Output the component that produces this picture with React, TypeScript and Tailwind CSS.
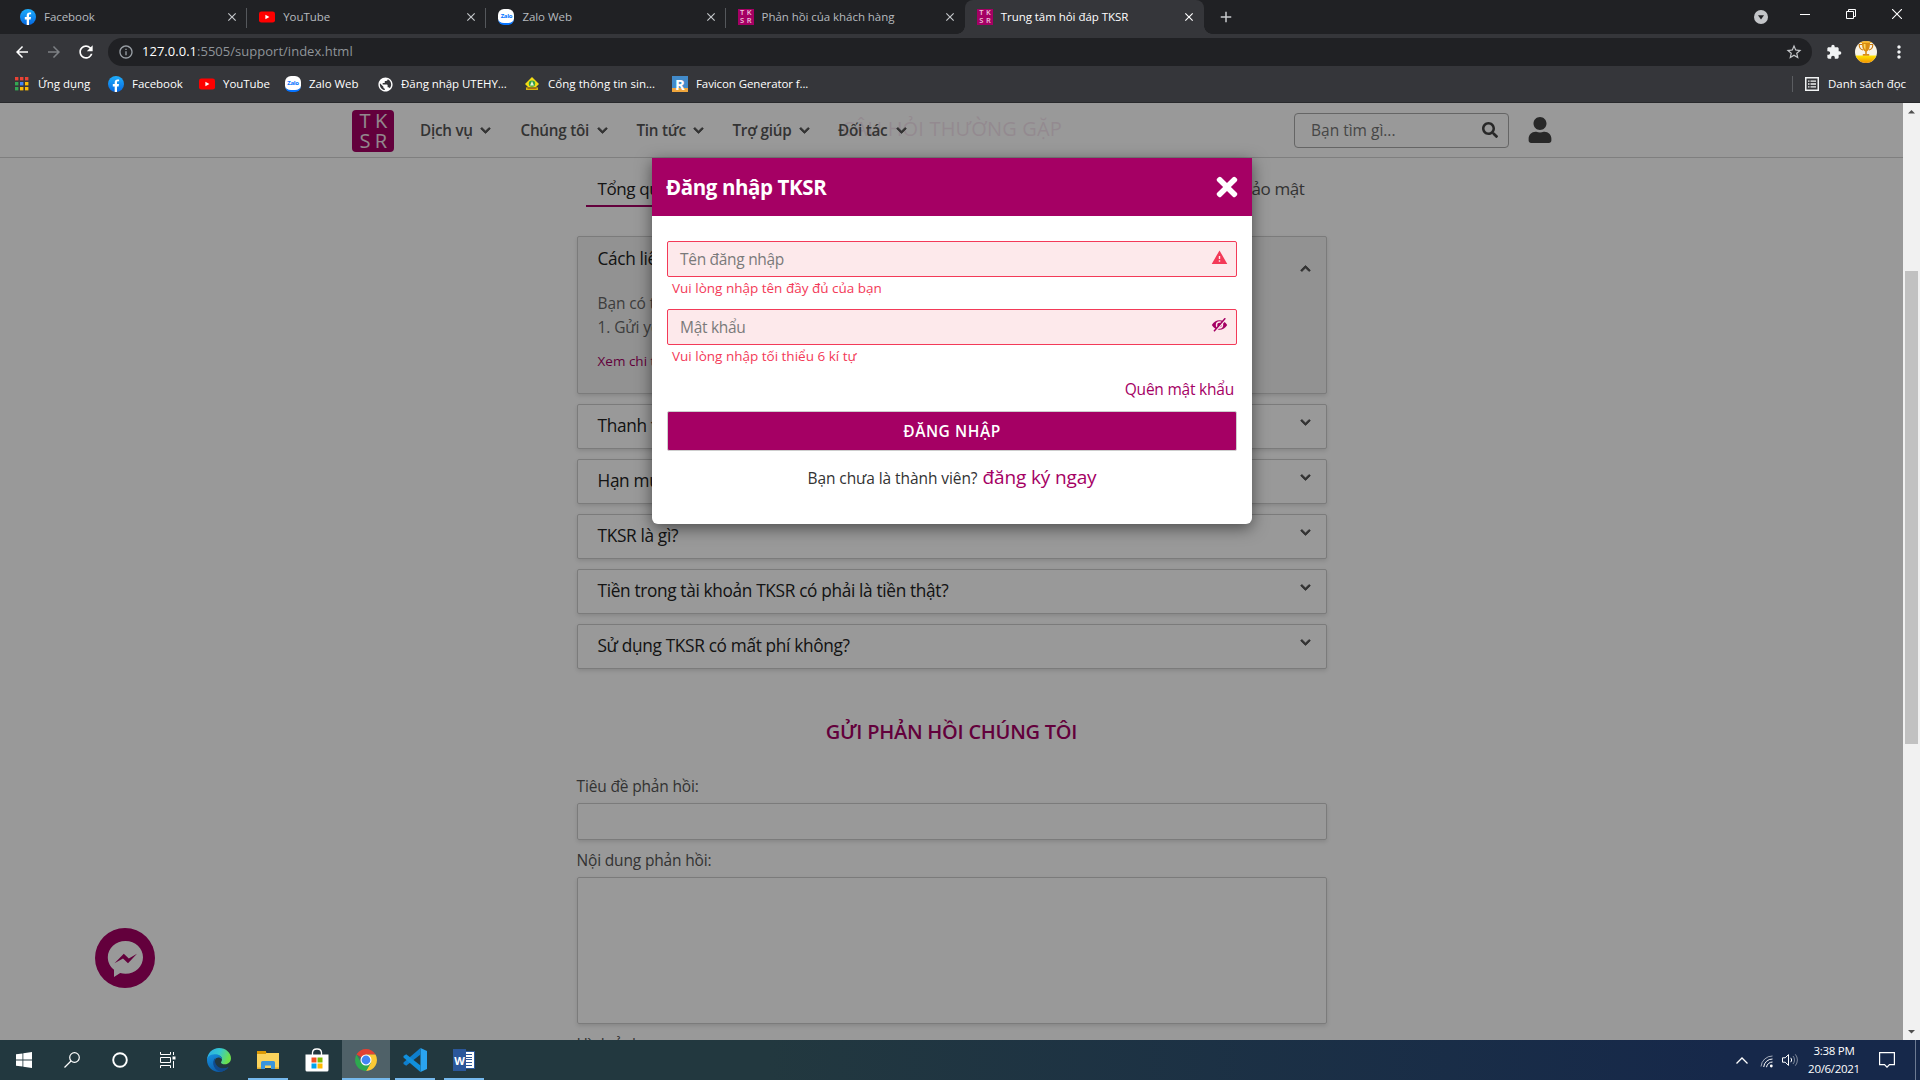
import type { ReactNode } from "react";
import {
  MdArrowBack,
  MdArrowForward,
  MdRefresh,
  MdInfoOutline,
  MdStarBorder,
  MdExtension,
  MdMoreVert,
  MdClose,
  MdAdd,
  MdPublic,
  MdWarning,
} from "react-icons/md";
import { FaChevronDown, FaChevronUp, FaSearch, FaUser, FaTimes } from "react-icons/fa";

/* ---------- small brand icons ---------- */

function FacebookIcon() {
  return (
    <svg width="16" height="16" viewBox="0 0 16 16" className="shrink-0">
      <defs>
        <linearGradient id="fb" x1="0" y1="0" x2="0" y2="1">
          <stop offset="0" stopColor="#1eaefc" />
          <stop offset="1" stopColor="#0668e1" />
        </linearGradient>
      </defs>
      <circle cx="8" cy="8" r="8" fill="url(#fb)" />
      <path d="M6.7 16v-5.6H4.8V8h1.9V6.5c0-2 1.1-3.1 2.9-3.1.7 0 1.5.1 1.5.1v1.8h-1c-.9 0-1.1.5-1.1 1.1V8H11l-.4 2.4H9V16z" fill="#fff" />
    </svg>
  );
}

function YouTubeIcon() {
  return (
    <svg width="16" height="16" viewBox="0 0 16 16" className="shrink-0">
      <rect x="0" y="2.4" width="16" height="11.2" rx="2.4" fill="#f00" />
      <path d="M6.4 5.7 10.4 8l-4 2.3z" fill="#fff" />
    </svg>
  );
}

function ZaloIcon() {
  return (
    <div className="flex h-4 w-4 shrink-0 items-center justify-center rounded-[6px] border-b-2 border-[#0573ff] bg-white">
      <span className="text-[6px] leading-none font-bold tracking-[-0.3px] text-[#0573ff]">Zalo</span>
    </div>
  );
}

function TksrFavicon() {
  return (
    <div className="grid h-4 w-4 shrink-0 grid-cols-2 grid-rows-2 place-items-center bg-[#a50064] px-px text-[7.5px] leading-none font-semibold text-[#f0c8de]">
      <span>T</span>
      <span>K</span>
      <span>S</span>
      <span>R</span>
    </div>
  );
}

function AppsIcon() {
  const colors = ["#ea4335", "#ea4335", "#ea4335", "#34a853", "#4285f4", "#fbbc05", "#34a853", "#fbbc05", "#fbbc05"];
  return (
    <svg width="14" height="14" viewBox="0 0 14 14" className="shrink-0">
      {colors.map((c, i) => (
        <rect key={i} x={(i % 3) * 5} y={Math.floor(i / 3) * 5} width="3.4" height="3.4" fill={c} />
      ))}
    </svg>
  );
}

function UniversityIcon() {
  return (
    <svg width="16" height="16" viewBox="0 0 16 16" className="shrink-0">
      <path d="M8 1 15 8l-3 3H4L1 8z" fill="#f2dc14" />
      <circle cx="8" cy="7.6" r="3.2" fill="#2f9e4a" />
      <path d="m8 5 2 4.4H6z" fill="#e8f5d0" />
      <path d="M2 11.4h12V14H2z" fill="#d9b50e" />
      <path d="M3.5 12.4h9" stroke="#a05a14" strokeWidth="0.9" />
    </svg>
  );
}

function RealFaviconIcon() {
  return (
    <div className="flex h-4 w-4 shrink-0 items-center justify-center border-b-4 border-[#f0a63c] bg-[#428bca]">
      <span className="mt-1 text-[15px] leading-none font-bold text-white">R</span>
    </div>
  );
}

/* ---------- browser chrome ---------- */

type TabInfo = { title: string; icon: ReactNode; active?: boolean; divider?: boolean };

const tabs: TabInfo[] = [
  { title: "Facebook", icon: <FacebookIcon />, divider: true },
  { title: "YouTube", icon: <YouTubeIcon />, divider: true },
  { title: "Zalo Web", icon: <ZaloIcon />, divider: true },
  { title: "Phản hồi của khách hàng", icon: <TksrFavicon /> },
  { title: "Trung tâm hỏi đáp TKSR", icon: <TksrFavicon />, active: true },
];

function Tab({ title, icon, active, divider }: TabInfo) {
  return (
    <div className={`relative flex h-[34px] w-[239.200px] items-center pl-3 ${active ? "rounded-t-lg bg-[#35363a]" : ""}`}>
      {active && (
        <>
          <span className="absolute bottom-0 -left-2 h-2 w-2 bg-[radial-gradient(circle_at_0_0,#202124_7.500px,#35363a_8px)]" />
          <span className="absolute -right-2 bottom-0 h-2 w-2 bg-[radial-gradient(circle_at_100%_0,#202124_7.500px,#35363a_8px)]" />
        </>
      )}
      {icon}
      <span className={`ml-2 flex-1 whitespace-nowrap ${active ? "text-white" : "text-[#b6babf]"}`}>{title}</span>
      <MdClose size={14} className={`mr-2 ${active ? "text-white" : "text-[#c4c7ca]"}`} />
      {divider && <span className="absolute top-2 right-0 h-5 w-px bg-[#55585c]" />}
    </div>
  );
}

function TabStrip() {
  return (
    <div className="flex h-[34px] bg-[#202124] pl-2">
      {tabs.map((t) => (
        <Tab key={t.title} {...t} />
      ))}
      <div className="ml-[13px] flex items-center text-[#c8cacd]">
        <MdAdd size={18} />
      </div>
      <div className="ml-auto flex text-white">
        <svg width="14" height="14" viewBox="0 0 14 14" className="mt-[10px] mr-[32px]">
          <circle cx="7" cy="7" r="7" fill="#c3c5c8" />
          <path d="M4 5.2h6L7 9.6z" fill="#202124" />
        </svg>
        <svg width="10" height="10" viewBox="0 0 10 10" className="mt-[9px] mr-[36px]">
          <path d="M0 5.5h10" stroke="#fff" />
        </svg>
        <svg width="10" height="10" viewBox="0 0 10 10" className="mt-[9px] mr-[36px]">
          <path d="M.5 2.5h7v7h-7zM2.5 2.5v-2h7v7h-2" stroke="#fff" fill="none" />
        </svg>
        <svg width="10" height="10" viewBox="0 0 10 10" className="mt-[9px] mr-[18px]">
          <path d="m0 0 10 10M10 0 0 10" stroke="#fff" strokeWidth="1.1" />
        </svg>
      </div>
    </div>
  );
}

function ProfileAvatar() {
  return (
    <svg width="22" height="22" viewBox="0 0 22 22" className="ml-[13px] shrink-0">
      <defs>
        <clipPath id="avatar">
          <circle cx="11" cy="11" r="11" />
        </clipPath>
        <linearGradient id="gold" x1="0" y1="0" x2="0" y2="1">
          <stop offset="0" stopColor="#ffe600" />
          <stop offset="1" stopColor="#f08c00" />
        </linearGradient>
      </defs>
      <g clipPath="url(#avatar)">
        <rect width="22" height="22" fill="#f7f3e6" />
        <rect width="22" height="2" fill="#f5b52a" />
        <rect y="14.500" width="22" height="8" fill="url(#gold)" />
        <path d="M7 2h8c0 5-1.200 7.500-3.200 8.500v2.400h2.400v1.800H7.800v-1.800h2.400v-2.400C8.200 9.500 7 7 7 2z" fill="#d98c12" />
        <path d="M7 3.500H4.200c0 3.500 1.300 5 3.800 5.500M15 3.500h2.800c0 3.500-1.300 5-3.800 5.500" stroke="#c9790a" strokeWidth="1.100" fill="none" />
        <path d="M8.600 3h1.900v6C9.300 8 8.600 6 8.600 3z" fill="#ffd75a" />
      </g>
    </svg>
  );
}

function Toolbar() {
  return (
    <div className="flex h-9 items-center bg-[#35363a] pr-3 pl-[13px]">
      <MdArrowBack size={18} className="text-white" />
      <MdArrowForward size={18} className="ml-[14px] text-[#7d8084]" />
      <MdRefresh size={20} className="ml-[13px] text-white" />
      <div className="ml-[12px] flex h-7 flex-1 items-center rounded-full bg-[#202124] pr-[9px] pl-[10px]">
        <MdInfoOutline size={16} className="text-[#9aa0a6]" />
        <span className="ml-2 text-[13px] tracking-[0.02px] text-[#8f9499]">
          <span className="text-white">127.0.0.1</span>:5505/support/index.html
        </span>
        <MdStarBorder size={18} className="ml-auto text-[#c4c7ca]" />
      </div>
      <MdExtension size={16} className="ml-[14px] text-[#f1f3f4]" />
      <ProfileAvatar />
      <MdMoreVert size={20} className="-mr-[1px] ml-[12px] text-[#f1f3f4]" />
    </div>
  );
}

const bookmarks: { label: string; icon: ReactNode; width: string }[] = [
  { label: "Ứng dụng", icon: <AppsIcon />, width: "w-[54px] pl-px" },
  { label: "Facebook", icon: <FacebookIcon />, width: "w-[51px]" },
  { label: "YouTube", icon: <YouTubeIcon />, width: "w-[46px]" },
  { label: "Zalo Web", icon: <ZaloIcon />, width: "w-[52px]" },
  { label: "Đăng nhập UTEHY...", icon: <MdPublic size={17} className="-mr-px shrink-0 text-white" />, width: "w-[107px]" },
  { label: "Cổng thông tin sin...", icon: <UniversityIcon />, width: "w-[108px] tracking-[0.04px]" },
  { label: "Favicon Generator f...", icon: <RealFaviconIcon />, width: "w-[112px] tracking-[-0.1px]" },
];

function BookmarksBar() {
  return (
    <div className="flex h-[33px] items-center gap-4 border-b border-[#28292c] bg-[#35363a] pr-[13px] pb-[4px] pl-[15px] text-white">
      {bookmarks.map((b, i) => (
        <div key={b.label} className={`flex items-center gap-2 ${i === 1 ? "ml-px" : ""}`}>
          {b.icon}
          <span className={`whitespace-nowrap ${b.width}`}>{b.label}</span>
        </div>
      ))}
      <div className="ml-auto flex items-center">
        <span className="mr-3 h-4 w-px bg-[#5b5d61]" />
        <svg width="14" height="14" viewBox="0 0 14 14" fill="none" stroke="#f1f3f4">
          <rect x=".75" y=".75" width="12.500" height="12.500" strokeWidth="1.500" />
          <path d="M3 4.200h1.500M3 7h1.500M3 9.800h1.500M5.500 4.200H11M5.500 7H11M5.500 9.800H11" strokeWidth="1.300" />
        </svg>
        <span className="ml-[9px] w-[79px] whitespace-nowrap">Danh sách đọc</span>
      </div>
    </div>
  );
}

/* ---------- site ---------- */

const menu: { label: string; width: string; box: string }[] = [
  { label: "Dịch vụ", width: "w-[53px]", box: "w-[100.500px]" },
  { label: "Chúng tôi", width: "w-[69px]", box: "w-[116px]" },
  { label: "Tin tức", width: "w-[49px]", box: "w-[96px]" },
  { label: "Trợ giúp", width: "w-[59px]", box: "w-[105.500px]" },
  { label: "Đối tác", width: "w-[51px]", box: "w-[80px]" },
];

function SiteHeader() {
  return (
    <header className="absolute inset-x-0 top-0 flex h-[55px] items-center border-b border-[#d4d4d4] bg-white/90 pl-[352px]">
      <div className="mt-[2px] grid h-[42px] w-[42px] grid-cols-2 grid-rows-2 place-items-center rounded bg-[#a50064] px-[5px] py-px text-[20px] leading-[20px] text-[#f3e3ec]">
        <span>T</span>
        <span>K</span>
        <span>S</span>
        <span>R</span>
      </div>
      <nav className="ml-[26px] flex text-[15.250px] font-semibold tracking-[-0.25px] text-[#555]">
        {menu.map((m) => (
          <div key={m.label} className={`flex items-center ${m.box}`}>
            <span className={`whitespace-nowrap ${m.width}`}>{m.label}</span>
            <FaChevronDown size={11} className="ml-[7px] stroke-current [stroke-width:40]" />
          </div>
        ))}
      </nav>
      <div className="ml-[376px] flex h-[35px] w-[215px] items-center rounded border border-[#a8a8a8] pr-[10px] pl-4">
        <span className="mt-px flex-1 text-[15.500px] text-[#757575]">Bạn tìm gì...</span>
        <FaSearch size={16} className="text-[#444]" />
      </div>
      <FaUser size={26} className="ml-[18px] text-[#444]" />
    </header>
  );
}

function FaqItem({ title }: { title: string }) {
  return (
    <div className="flex h-[45px] items-center justify-between rounded-[2px] border border-[#cecece] bg-white pr-[15px] pl-5 shadow-[0_2px_4px_rgba(0,0,0,0.12)]">
      <span className="-mt-[2px] text-[17.250px] tracking-[-0.34px] text-[#222]">{title}</span>
      <FaChevronDown size={11} className="mb-[9px] stroke-current text-[#555] [stroke-width:40]" />
    </div>
  );
}

function SupportContent() {
  return (
    <main className="mx-auto w-[750px] pt-[11px]">
      <h2 className="pl-px text-center text-[20px] leading-[30px] font-medium tracking-[0.17px] text-[#a50064]">CÂU HỎI THƯỜNG GẶP</h2>
      <div className="mr-[10px] ml-[9px] mt-[29px] flex justify-between text-[17px] leading-[31px] tracking-[-0.4px]">
        <span className="border-b-2 border-[#a50064] px-3 pb-px text-[#222]">Tổng quan</span>
        <span className="border-b-2 border-transparent px-3 pb-px text-[#555]">Bảo mật</span>
      </div>

      <div className="mt-[29px] flex flex-col gap-[10px]">
        <div className="flex h-[158px] items-start justify-between rounded-[2px] border border-[#cecece] bg-[#f4f4f4] pt-[10px] pr-[15px] pl-5 shadow-[0_2px_4px_rgba(0,0,0,0.12)]">
          <div>
            <h3 className="text-[17.250px] leading-6 tracking-[-0.34px] text-[#222]">Cách liên hệ</h3>
            <p className="mt-[20px] text-[15.500px] leading-6 tracking-[-0.1px] text-[#666]">
              Bạn có thể
              <br />
              1. Gửi yêu cầu
            </p>
            <p className="mt-[12px] text-[13.500px] leading-5 text-[#a50064]">Xem chi tiết</p>
          </div>
          <FaChevronUp size={11} className="mt-[16px] stroke-current text-[#555] [stroke-width:40]" />
        </div>
        <FaqItem title="Thanh toán" />
        <FaqItem title="Hạn mức" />
        <FaqItem title="TKSR là gì?" />
        <FaqItem title="Tiền trong tài khoản TKSR có phải là tiền thật?" />
        <FaqItem title="Sử dụng TKSR có mất phí không?" />
      </div>

      <h2 className="mt-[48px] text-center text-[20px] leading-[30px] font-semibold tracking-[-0.25px] text-[#a50064]">GỬI PHẢN HỒI CHÚNG TÔI</h2>
      <form className="text-[15.500px] leading-6 tracking-[-0.16px] text-[#555]">
        <label className="mt-[27px] block">Tiêu đề phản hồi:</label>
        <div className="mt-[5px] h-[37px] rounded-[2px] border border-[#cecece] shadow-[0_2px_4px_rgba(0,0,0,0.12)]" />
        <label className="mt-[8px] block">Nội dung phản hồi:</label>
        <div className="mt-[5px] h-[147px] rounded-[2px] border border-[#cecece] shadow-[0_2px_4px_rgba(0,0,0,0.12)]" />
        <label className="mt-[8px] block">Hình ảnh:</label>
      </form>
    </main>
  );
}

function MessengerButton() {
  return (
    <div className="absolute bottom-[52px] left-[95px] h-[60px] w-[60px]">
      <svg width="60" height="60" viewBox="0 0 60 60">
        <circle cx="30" cy="30" r="30" fill="#a50064" />
        <path d="M30.500 13c9.900 0 17.500 7.200 17.500 16.300S40.400 45.800 30.500 45.800c-1.900 0-3.700-.3-5.300-.8L19 49v-7.200c-3.900-3-6.200-7.500-6.200-12.500C12.800 20.200 20.600 13 30.500 13z" fill="#fff" />
        <path d="m19.500 35.300 9.300-9.600 5 4.700 8.200-4.700-9 9.500-5-4.700z" fill="#a50064" />
      </svg>
    </div>
  );
}

function EyeSlashIcon() {
  return (
    <svg width="17" height="14" viewBox="0 0 17 14">
      <path d="M.8 7C2.600 3.800 5.300 2.200 8.500 2.200S14.400 3.800 16.200 7c-1.800 3.200-4.500 4.800-7.700 4.800S2.600 10.200.8 7z" fill="#a50064" />
      <circle cx="8.500" cy="7" r="3.700" fill="#fde9eb" />
      <circle cx="8.500" cy="7" r="2.300" fill="#a50064" />
      <path d="M14.700 1.500 4 13.700" stroke="#fde9eb" strokeWidth="1.600" />
      <path d="M14.300.2 3 13.200" stroke="#a50064" strokeWidth="1.500" />
    </svg>
  );
}

function LoginModal() {
  return (
    <div className="absolute top-[55px] left-[652px] h-[366px] w-[600px] rounded-b-[6px] bg-white shadow-[0_4px_16px_rgba(0,0,0,0.5)]">
      <div className="flex h-[58px] items-center justify-between bg-[#a50064] pr-[14px] pl-[14px] text-white">
        <h1 className="text-[20.500px] font-bold tracking-[-0.4px]">Đăng nhập TKSR</h1>
        <FaTimes size={30} className="-mr-[4px]" />
      </div>
      <div className="px-[15px] pt-[25px]">
        <div className="flex h-[36px] items-center justify-between rounded-[2px] border border-[#f33a58] bg-[#fde9eb] pr-[8px] pl-3">
          <span className="mt-px text-[15.500px] tracking-[-0.3px] text-[#7a7a7a]">Tên đăng nhập</span>
          <MdWarning size={17} className="mb-[4px] text-[#f33a58]" />
        </div>
        <p className="ml-[5px] text-[13.500px] leading-[22px] text-[#f33a58]">Vui lòng nhập tên đầy đủ của bạn</p>
        <div className="mt-[10px] flex h-[36px] items-center justify-between rounded-[2px] border border-[#f33a58] bg-[#fde9eb] pr-[8px] pl-3">
          <span className="mt-px text-[15.500px] tracking-[-0.3px] text-[#7a7a7a]">Mật khẩu</span>
          <span className="mb-[4px]">
            <EyeSlashIcon />
          </span>
        </div>
        <p className="ml-[5px] text-[13.500px] leading-[22px] text-[#f33a58]">Vui lòng nhập tối thiểu 6 kí tự</p>
        <p className="mt-[10px] mr-[3px] text-right text-[15.500px] leading-6 tracking-[-0.22px] text-[#a50064]">Quên mật khẩu</p>
        <button className="mt-[10px] block h-[40px] w-full rounded-[2px] border border-[#cecece] bg-[#a50064] pt-px text-[15.500px] font-semibold tracking-[0.55px] text-white">
          ĐĂNG NHẬP
        </button>
        <p className="mt-[11px] flex items-baseline justify-center gap-[5px] text-[15.500px] leading-[30px] tracking-[-0.08px] text-[#333]">
          Bạn chưa là thành viên?
          <span className="text-[19px] tracking-[-0.13px] text-[#a50064]">đăng ký ngay</span>
        </p>
      </div>
    </div>
  );
}

function Scrollbar() {
  return (
    <div className="flex w-[17px] flex-col items-center bg-[#f1f1f1]">
      <svg width="17" height="17" viewBox="0 0 17 17">
        <path d="M5 10.500h7L8.500 7z" fill="#505050" />
      </svg>
      <div className="mt-[151px] h-[473px] w-[13px] bg-[#c1c1c1]" />
      <svg width="17" height="17" viewBox="0 0 17 17" className="mt-auto">
        <path d="M5 7h7l-3.500 3.500z" fill="#505050" />
      </svg>
    </div>
  );
}

/* ---------- windows taskbar ---------- */

function EdgeLogo() {
  return (
    <svg width="24" height="24" viewBox="0 0 24 24">
      <defs>
        <linearGradient id="edgeTop" x1="0" y1="0" x2="1" y2="0.300">
          <stop offset="0" stopColor="#2aa9e8" />
          <stop offset=".55" stopColor="#35c8d0" />
          <stop offset="1" stopColor="#6be04c" />
        </linearGradient>
        <linearGradient id="edgeLow" x1="0" y1="0" x2="0.600" y2="1">
          <stop offset="0" stopColor="#1590df" />
          <stop offset="1" stopColor="#0c59a4" />
        </linearGradient>
      </defs>
      <path d="M0 11.500C.5 5 5.500 0 12 0c7 0 12 5 12 10.200 0 3.600-2.700 6-6 6-2.500 0-4-.8-4-1.800 0-.6 1-1.200 1-2.900C15 8.600 12.500 7 9 7c-4 0-7.500 1.800-9 4.500z" fill="url(#edgeTop)" />
      <path d="M0 12c0-2.800 3-5.700 7.500-5.700C12 6.300 15 8.300 15 11.500c-1-1.500-2.400-1.900-3.600-1.900-3 0-4 3-3.400 5.600.8 3.300 4 5.600 7.600 5.600 2.300 0 4.500-.8 5.900-1.700C19.500 22 16 24 12 24 5.500 24 0 18.600 0 12z" fill="url(#edgeLow)" />
      <path d="M8.500 9.800C6 12 5.600 15.500 7 18.500c1.500 3.300 4.500 5.300 7.500 5.200 2.800-.4 5.400-2.300 7-4.600-2.500 1.500-5.500 2-8.500.7C8.800 18 6.800 13.500 8.500 9.800z" fill="#114a8b" />
    </svg>
  );
}

function ExplorerLogo() {
  return (
    <svg width="22" height="20" viewBox="0 0 22 20">
      <path d="M0 1.500h8.500l1.500 2H0z" fill="#e2a000" />
      <path d="M0 3h22v15H0z" fill="#fbd35c" />
      <path d="M0 1h9v3H0z" fill="#dd9a05" />
      <path d="M4 19v-6.500a1.500 1.500 0 0 1 1.500-1.500h11a1.500 1.500 0 0 1 1.500 1.500V19h-4v-3.500H8V19z" fill="#3a95dc" />
      <path d="M0 17.500h4V19H0zM18 17.500h4V19h-4z" fill="#e5ae2e" />
    </svg>
  );
}

function StoreLogo() {
  return (
    <svg width="24" height="24" viewBox="0 0 24 24">
      <path d="M7.500 7V4.500a4 4 0 0 1 4-3.500h1a4 4 0 0 1 4 3.500V7" stroke="#fff" strokeWidth="1.300" fill="none" />
      <path d="M.5 6.500h23V22a1.500 1.500 0 0 1-1.500 1.500H2A1.500 1.500 0 0 1 .5 22z" fill="#fff" />
      <path d="M6.500 9.500h5v5h-5z" fill="#f25022" />
      <path d="M12.500 9.500h5v5h-5z" fill="#7fba00" />
      <path d="M6.500 15.500h5v5h-5z" fill="#00a4ef" />
      <path d="M12.500 15.500h5v5h-5z" fill="#ffb900" />
    </svg>
  );
}

function ChromeLogo() {
  return (
    <svg width="24" height="24" viewBox="0 0 24 24">
      <path d="M12 12 2.500 6.500A11 11 0 0 1 21.500 6.500H12z" fill="#e34133" />
      <path d="M12 6.500h9.500A11 11 0 0 1 12 23l4.800-8.200z" fill="#fcc934" />
      <path d="M2.500 6.500A11 11 0 0 0 12 23l4.800-8.200H7.200z" fill="#2da94f" />
      <circle cx="12" cy="12" r="5.500" fill="#fff" />
      <circle cx="12" cy="12" r="4.400" fill="#4285f4" />
    </svg>
  );
}

function VsCodeLogo() {
  return (
    <svg width="24" height="24" viewBox="0 0 24 24">
      <path d="M17.500 0 24 3v18l-6.500 3z" fill="#2aa3f0" />
      <path d="M17.500 0v6.500L3.200 17.800.5 16v-1.500z" fill="#0f7fce" />
      <path d="M17.500 24v-6.500L3.200 6.200.5 8v1.500z" fill="#1190dd" />
    </svg>
  );
}

function WordLogo() {
  return (
    <div className="flex h-[22px] w-[22px] items-center">
      <div className="flex h-[22px] w-[13px] items-center justify-center bg-[#2b579a] text-[11px] leading-none font-bold text-white">W</div>
      <div className="flex h-[18px] w-[9px] flex-col justify-evenly border border-l-0 border-[#2b579a] bg-white pr-[2px]">
        <span className="h-px bg-[#2b579a]" />
        <span className="h-px bg-[#2b579a]" />
        <span className="h-px bg-[#2b579a]" />
        <span className="h-px bg-[#2b579a]" />
        <span className="h-px bg-[#2b579a]" />
      </div>
    </div>
  );
}

const apps: { name: string; icon: ReactNode; running?: boolean; active?: boolean }[] = [
  { name: "edge", icon: <EdgeLogo /> },
  { name: "explorer", icon: <ExplorerLogo />, running: true },
  { name: "store", icon: <StoreLogo /> },
  { name: "chrome", icon: <ChromeLogo />, running: true, active: true },
  { name: "vscode", icon: <VsCodeLogo />, running: true },
  { name: "word", icon: <WordLogo />, running: true },
];

function Taskbar() {
  return (
    <div className="flex h-10 bg-linear-to-r from-[#22383f] from-40% to-[#16284a] to-90% text-white">
      <div className="flex w-12 items-center justify-center">
        <svg width="16" height="16" viewBox="0 0 16 16" fill="#fff">
          <path d="M0 2.300 6.500 1.400v6.200H0zM7.300 1.300 16 0v7.600H7.300zM0 8.400h6.500v6.200L0 13.700zM7.300 8.400H16V16l-8.700-1.300z" />
        </svg>
      </div>
      <div className="flex w-12 items-center justify-center">
        <svg width="16" height="16" viewBox="0 0 16 16" fill="none" stroke="#fff" strokeWidth="1.200">
          <circle cx="10.500" cy="5.500" r="4.800" />
          <path d="M7 9 .5 15.500" />
        </svg>
      </div>
      <div className="flex w-12 items-center justify-center">
        <svg width="16" height="16" viewBox="0 0 16 16">
          <circle cx="8" cy="8" r="6.800" fill="none" stroke="#fff" strokeWidth="1.900" />
        </svg>
      </div>
      <div className="flex w-12 items-center justify-center">
        <svg width="16" height="16" viewBox="0 0 16 16" fill="none" stroke="#fff">
          <path d="M.5 0v2.500h10V0M.5 16v-2.500h10V16M.5 5.500h10v5H.5zM13.500 0v3M13.500 9v7" />
          <path d="M12.500 4.500h3v3h-3z" fill="#fff" stroke="none" />
        </svg>
      </div>
      <div className="ml-[3px] flex gap-px">
        {apps.map((a) => (
          <div key={a.name} className={`flex h-10 w-12 flex-col items-center ${a.active ? "bg-[#4f6168]" : ""}`}>
            <span className="flex flex-1 items-center">{a.icon}</span>
            {a.running && <span className={`-mt-[2px] h-[2px] bg-[#76b9ed] ${a.active ? "w-12" : "w-10"}`} />}
          </div>
        ))}
      </div>

      <div className="ml-auto flex items-center">
        <svg width="12" height="7" viewBox="0 0 12 7" fill="none" stroke="#fff" strokeWidth="1.300">
          <path d="m.5 6.500 5.500-5.500 5.500 5.500" />
        </svg>
        <svg width="14" height="14" viewBox="0 0 14 14" fill="none" stroke="#fff" strokeWidth="1" className="mt-[2px] ml-[12px]">
          <path d="M1 12.500A11.500 11.500 0 0 1 12.500 2" opacity=".6" />
          <path d="M3.700 13A8.800 8.800 0 0 1 12.500 5" />
          <path d="M6.500 13.200a6 6 0 0 1 6-5.200" />
          <circle cx="11.300" cy="12" r="1.400" fill="#fff" stroke="none" />
        </svg>
        <svg width="17" height="14" viewBox="0 0 17 14" fill="none" stroke="#fff" strokeWidth="1" className="ml-[8px]">
          <path d="M.5 4.800h2.700L6.500 1.600v10.800L3.200 9.200H.5z" />
          <path d="M8.800 4.800a3.400 3.400 0 0 1 0 4.400" />
          <path d="M11 3a6 6 0 0 1 0 8M13.300 1.300a8.800 8.800 0 0 1 0 11.400" opacity=".45" />
        </svg>
        <div className="-mt-px ml-[9px] w-[52px] text-center text-[11.500px] leading-[18px] tracking-[-0.3px] whitespace-nowrap">
          <div>3:38 PM</div>
          <div>20/6/2021</div>
        </div>
        <svg width="16" height="16" viewBox="0 0 16 16" fill="none" stroke="#fff" strokeWidth="1.200" className="ml-[19px]">
          <path d="M.6.600h14.800v12H10.500L8 15.200 5.500 12.600H.6z" />
        </svg>
        <span className="mr-1 ml-[20px] h-10 w-px bg-[#6c7a92]" />
      </div>
    </div>
  );
}

export default function App() {
  return (
    <div className="flex h-[1080px] w-[1920px] flex-col overflow-hidden font-['Open_Sans','Noto_Sans',sans-serif]">
      <div className="text-[11.500px] tracking-[-0.05px]">
        <TabStrip />
        <Toolbar />
        <BookmarksBar />
      </div>
      <div className="flex h-[937px]">
        <div className="relative w-[1903px] overflow-hidden bg-white">
          <SupportContent />
          <SiteHeader />
          <MessengerButton />
          <div className="absolute inset-0 bg-black/40" />
          <LoginModal />
        </div>
        <Scrollbar />
      </div>
      <Taskbar />
    </div>
  );
}
